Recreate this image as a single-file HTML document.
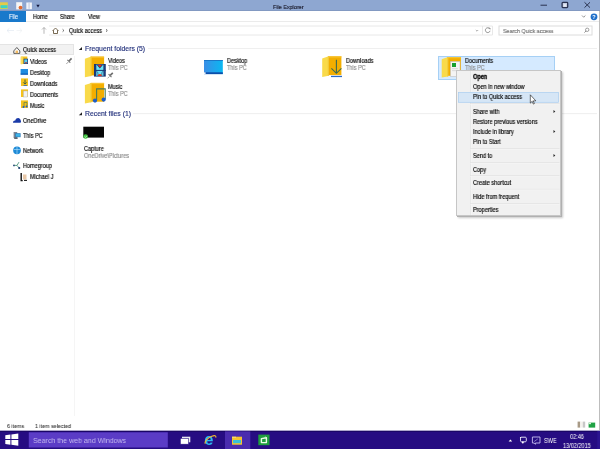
<!DOCTYPE html>
<html><head><meta charset="utf-8">
<style>
*{margin:0;padding:0;box-sizing:border-box}
html,body{width:600px;height:449px;overflow:hidden;background:#fff;font-family:"Liberation Sans",sans-serif;color:#000}
.a{position:absolute;white-space:nowrap}
.t{font-size:6.3px;line-height:7px;transform:scaleX(.88);transform-origin:0 0;will-change:transform;-webkit-text-stroke:0.15px currentColor}
.g{color:#8a8a8a}
svg{position:absolute;overflow:visible}
</style></head><body>
<!-- ===== title bar ===== -->
<div class="a" style="left:0;top:0;width:600px;height:11px;background:#8ea7d1;border-bottom:1px solid #8299c2"></div>
<svg style="left:0;top:0" width="45" height="11">
  <rect x="0" y="2.3" width="7.8" height="6.7" fill="#e4cc48"/>
  <rect x="0.5" y="5.2" width="7" height="3" fill="#3cd4c8"/>
  <rect x="16.2" y="2.2" width="6" height="7.2" fill="#f6f6f6"/>
  <circle cx="20.5" cy="7.6" r="1.9" fill="#e26a30"/>
  <rect x="26.3" y="2.5" width="5.6" height="6.7" fill="#f2f4fa"/>
  <rect x="28.6" y="3" width="0.9" height="5.8" fill="#b8c4dc"/>
  <path d="M36.3 4.8h3.4l-1.7 2.6z" fill="#141a40"/>
</svg>
<div class="a t" style="left:273px;top:2.6px;font-size:6.2px;color:#1a1a2a">File Explorer</div>
<svg style="left:0;top:0" width="600" height="11">
  <rect x="540.5" y="4.7" width="6.5" height="1" fill="#2a3350"/>
  <rect x="562.1" y="2.4" width="5.6" height="5.2" rx="0.8" fill="#c8d0e4" stroke="#2a3350" stroke-width="1.3"/><rect x="563.6" y="4.2" width="2.4" height="2.4" fill="#e8ecf4"/>
  <path d="M584.5 2.3l5.5 5.3M590 2.3l-5.5 5.3" stroke="#2a3350" stroke-width="1"/>
</svg>
<div class="a" style="left:599px;top:11px;width:1px;height:419px;background:#bdbdbd"></div>

<!-- ===== ribbon tabs ===== -->
<div class="a" style="left:0;top:11px;width:26px;height:11px;background:#1979cb"></div>
<div class="a t" style="left:9px;top:12.9px;color:#e8f2ff">File</div>
<div class="a t" style="left:33px;top:12.9px">Home</div>
<div class="a t" style="left:60px;top:12.9px">Share</div>
<div class="a t" style="left:88px;top:12.9px">View</div>
<div class="a" style="left:26px;top:21.3px;width:573px;height:1px;background:#ebebeb"></div>
<svg style="left:0;top:0" width="600" height="40">
  <path d="M582 15.5l1.7 1.7 1.7-1.7" fill="none" stroke="#777" stroke-width="0.8"/>
  <circle cx="594" cy="16.8" r="3.4" fill="#1f6fc9"/>
  <text x="592.3" y="19.3" font-size="5.5" font-weight="bold" fill="#fff" font-family="Liberation Sans">?</text>
</svg>

<!-- ===== address row ===== -->
<svg style="left:0;top:0" width="600" height="40">
  <path d="M7 30.5h7M7 30.5l2.5-2.3M7 30.5l2.5 2.3" fill="none" stroke="#e2eaf2" stroke-width="0.7"/>
  <path d="M16.5 30.5h5.5M22 30.5l-2.5-2.3M22 30.5l-2.5 2.3" fill="none" stroke="#eef1f4" stroke-width="0.7"/>
  <path d="M44 33.8v-6.3M42 29.5l2-2 2 2" fill="none" stroke="#9a9a9a" stroke-width="0.7"/>
  <path d="M52.5 31l3-3 3 3M53.5 30.2v3.3h4v-3.3" fill="none" stroke="#6a5a40" stroke-width="0.9"/>
  <path d="M62.6 29.3l1.3 1.2-1.3 1.2" fill="none" stroke="#444" stroke-width="0.8"/>
  <path d="M106 29.3l1.3 1.2-1.3 1.2" fill="none" stroke="#444" stroke-width="0.8"/>
  <path d="M49 26H492.5V35H49" fill="none" stroke="#e8e8e8" stroke-width="1"/>
  <path d="M475.8 30l1.2 1.2 1.2-1.2" fill="none" stroke="#888" stroke-width="0.7"/>
  <rect x="482" y="26" width="0.8" height="9" fill="#e4e4e4"/>
  <path d="M489.6 28.6a2.4 2.4 0 1 0 .5 2.2" fill="none" stroke="#777" stroke-width="0.8"/>
  <path d="M488.6 28.3l1.4-.3.2 1.4" fill="none" stroke="#777" stroke-width="0.7"/>
  <rect x="499" y="26" width="93" height="9" fill="none" stroke="#dcdcdc" stroke-width="1"/>
  <circle cx="587.2" cy="29.8" r="1.7" fill="none" stroke="#777" stroke-width="0.7"/>
  <path d="M586 31l-1.6 1.6" stroke="#777" stroke-width="0.8"/>
</svg>
<div class="a t" style="left:69px;top:27.3px">Quick access</div>
<div class="a t g" style="left:503px;top:27.3px;font-size:6.1px;color:#707070">Search Quick access</div>

<!-- ===== nav pane ===== -->
<div class="a" style="left:0;top:44px;width:74px;height:11px;background:#f2f2f2;border:0.5px solid #e4e4e4;border-left:0"></div>
<div class="a t" style="left:23px;top:46px">Quick access</div>
<div class="a t" style="left:30px;top:57.5px">Videos</div>
<div class="a t" style="left:30px;top:68.5px">Desktop</div>
<div class="a t" style="left:30px;top:79.5px">Downloads</div>
<div class="a t" style="left:30px;top:90.5px">Documents</div>
<div class="a t" style="left:30px;top:101.5px">Music</div>
<div class="a t" style="left:23px;top:116.5px">OneDrive</div>
<div class="a t" style="left:23px;top:131.5px">This PC</div>
<div class="a t" style="left:23px;top:146.5px">Network</div>
<div class="a t" style="left:23px;top:161.5px">Homegroup</div>
<div class="a t" style="left:30px;top:173px">Michael J</div>
<div class="a" style="left:74px;top:56px;width:1px;height:360px;background:#f5f5f5"></div>


<svg style="left:0;top:0" width="80" height="190">
  <!-- quick access home -->
  <path d="M13.8 50.9l3-3.4 3 3.4v2.5h-6z" fill="#fafafa" stroke="#4a4a4a" stroke-width="0.9" stroke-linejoin="round"/><rect x="15.6" y="50.6" width="2.4" height="2.6" fill="#f0b860"/>
  <!-- videos -->
  <rect x="20.8" y="56.5" width="6.5" height="7.5" fill="#f5c21c"/>
  <path d="M20.8 57.2l2-.7v7.6l-2 .3z" fill="#f9de60"/>
  <rect x="23.6" y="58.7" width="4.4" height="5.3" fill="#1c3a78"/>
  <rect x="24.3" y="59.4" width="3" height="3.9" fill="#5ccbea"/>
  <rect x="25" y="62.3" width="2" height="1" fill="#c03020"/>
  <!-- desktop -->
  <rect x="20.6" y="69" width="7.4" height="5.6" fill="#1f8ce0"/>
  <rect x="20.6" y="73.6" width="7.4" height="1" fill="#0c4eaa"/>
  <!-- downloads -->
  <rect x="21" y="78.4" width="7" height="7.6" fill="#f5c21c"/>
  <path d="M25 79.5v4.5M23.3 82.4l1.7 1.7 1.7-1.7" fill="none" stroke="#2f5a46" stroke-width="0.9"/>
  <rect x="23.5" y="85.2" width="3.5" height="0.8" fill="#2a6ac8"/>
  <!-- documents -->
  <rect x="21" y="89.4" width="7" height="7.6" fill="#f5c21c"/>
  <rect x="23.4" y="91" width="4.2" height="6" fill="#f2f2f2" stroke="#aaa" stroke-width="0.4"/>
  <!-- music -->
  <rect x="21" y="100.4" width="7" height="7.6" fill="#f5c21c"/>
  <path d="M24 107v-4.6h3v4" fill="none" stroke="#4a7a58" stroke-width="0.7"/>
  <circle cx="23.5" cy="107" r="1" fill="#1d5ec8"/><circle cx="26.6" cy="106.6" r="1" fill="#1d5ec8"/>
  <!-- pin -->
  <g transform="translate(0,0)"><path d="M69 61l2.6-2.6" stroke="#6e6e6e" stroke-width="1.7"/><path d="M67.4 59.8l2.9 2.9" stroke="#6e6e6e" stroke-width="1.1"/><path d="M68.3 62l-2 2" stroke="#8a8a8a" stroke-width="0.8"/></g>
  <!-- onedrive -->
  <path d="M13 122.7c0-1.6 1.2-2.4 2.3-2.2.4-1.6 1.6-2.4 2.8-2.4 1.3 0 2.4 1 2.6 2.4.7.1 .1 2.2-.1 2.2z" fill="#1a3aa8"/>
  <!-- this pc -->
  <rect x="13.6" y="132" width="3.6" height="6" fill="#7a8694"/>
  <rect x="15.2" y="133.2" width="5.4" height="4" fill="#2c7ab8"/>
  <rect x="15.9" y="133.8" width="4" height="2.8" fill="#3cb4e8"/>
  <rect x="14.2" y="137.4" width="3.4" height="1.6" fill="#5a6470"/>
  <!-- network -->
  <circle cx="17" cy="150.4" r="3.8" fill="#1e8ad6"/>
  <path d="M14 149.5h6M17 146.8v7.2" stroke="#b8e4ff" stroke-width="0.6"/>
  <!-- homegroup -->
  <circle cx="14" cy="165.4" r="0.9" fill="#1a3a70"/>
  <path d="M14.5 165.4h2.5l2-3.3M17 165.4l2 2.4" fill="none" stroke="#3a8a70" stroke-width="0.8"/>
  <circle cx="19.2" cy="168" r="1.1" fill="#1a3a70"/>
  <!-- user -->
  <path d="M21.2 173v7.6h1.5" fill="none" stroke="#111" stroke-width="1.4"/>
  <rect x="23" y="174.5" width="3.5" height="5" fill="#e8c8a8"/>
  <path d="M24 180.4h3" stroke="#111" stroke-width="1"/>
</svg>
<!-- ===== content ===== -->
<div class="a" style="left:438px;top:55.5px;width:117px;height:24.5px;background:#d5eaff;border:1px solid #a6d0f5"></div>
<div class="a" style="left:84.7px;top:44.6px;font-size:6.85px;line-height:8px;color:#24327c;will-change:transform;-webkit-text-stroke:0.15px currentColor">Frequent folders (5)</div>
<div class="a" style="left:84.7px;top:109.8px;font-size:6.85px;line-height:8px;color:#24327c;will-change:transform;-webkit-text-stroke:0.15px currentColor">Recent files (1)</div>


<svg style="left:0;top:0" width="600" height="200">
  
  <path d="M78.8 50l3.2-3v3z" fill="#222"/>
  <rect x="148" y="48" width="449" height="0.8" fill="#ececec"/>
  <path d="M78.8 115.3l3.2-3v3z" fill="#222"/>
  <rect x="133" y="113.3" width="464" height="0.8" fill="#eaeaea"/>
  <!-- Videos -->
  <g transform="translate(84.9,56.6)">
      <rect x="5.8" y="0" width="13.4" height="18.8" fill="#f3ae00"/>
      <rect x="5.8" y="0" width="13.4" height="1.2" fill="#f8c430"/>
      <path d="M0 2.2L6.4 0V19.4L0 20.6Z" fill="#f9da4a"/>
      <path d="M5.6 0.1L6.6 0V19.4L5.6 19.6Z" fill="#f0c838"/>
    </g>
  <rect x="94" y="64" width="11.75" height="12.6" fill="#1a3570"/>
  <rect x="96.3" y="64.7" width="7.1" height="11.2" fill="#6ee6f6"/>
  <path d="M96.6 64.7h6.5l-3.25 3.9z" fill="#1a3570"/>
  <path d="M97.6 64.7h4.5l-2.25 2.8z" fill="#e0301c"/>
  <rect x="94" y="69.9" width="11.75" height="1" fill="#1a3570"/>
  <path d="M96.3 71c1.6.6 2 2.5 1.4 5M103.4 71c-1.6.6-2 2.5-1.4 5" fill="none" stroke="#1a3570" stroke-width="0.6"/>
  <path d="M97.7 75.9a2.1 1.9 0 0 1 4.2 0z" fill="#e0301c"/>
  <path d="M95.1 65.5v10M104.6 65.5v10" stroke="#3a5aa0" stroke-width="0.7" stroke-dasharray="0.8 1.2"/>
  <g transform="translate(41.2,14.4)"><path d="M69 61l2.6-2.6" stroke="#6e6e6e" stroke-width="1.7"/><path d="M67.4 59.8l2.9 2.9" stroke="#6e6e6e" stroke-width="1.1"/><path d="M68.3 62l-2 2" stroke="#8a8a8a" stroke-width="0.8"/></g>
  <!-- Music -->
  <g transform="translate(84.9,82.9)">
      <rect x="5.8" y="0" width="13.4" height="18.8" fill="#f3ae00"/>
      <rect x="5.8" y="0" width="13.4" height="1.2" fill="#f8c430"/>
      <path d="M0 2.2L6.4 0V19.4L0 20.6Z" fill="#f9da4a"/>
      <path d="M5.6 0.1L6.6 0V19.4L5.6 19.6Z" fill="#f0c838"/>
    </g>
  <path d="M96.6 100V88.9H105.2V99" fill="none" stroke="#4a7a58" stroke-width="1.1"/>
  <circle cx="95" cy="100.6" r="2.1" fill="#1d5ec8"/>
  <circle cx="103.7" cy="99.6" r="2.1" fill="#1d5ec8"/>
  <!-- Desktop -->
  <defs><linearGradient id="dg" x1="0" x2="1"><stop offset="0" stop-color="#3a8ee6"/><stop offset="1" stop-color="#0ab8f2"/></linearGradient></defs>
  <rect x="204" y="60" width="18.8" height="14.1" fill="url(#dg)"/>
  <rect x="204" y="60" width="18.8" height="1" fill="#1a78c8"/>
  <rect x="204" y="72.3" width="18.8" height="1.8" fill="#0c4eaa"/>
  <rect x="204" y="72.3" width="1.6" height="1.8" fill="#e8f4ff"/>
  <!-- Downloads -->
  <g transform="translate(322.2,56.3)">
      <rect x="5.8" y="0" width="13.4" height="18.8" fill="#f3ae00"/>
      <rect x="5.8" y="0" width="13.4" height="1.2" fill="#f8c430"/>
      <path d="M0 2.2L6.4 0V19.4L0 20.6Z" fill="#f9da4a"/>
      <path d="M5.6 0.1L6.6 0V19.4L5.6 19.6Z" fill="#f0c838"/>
    </g>
  <path d="M336.4 59.8v13.3M331.4 68.4l5 4.9 5-4.9" fill="none" stroke="#3b6b52" stroke-width="1.1"/>
  <rect x="331" y="75.8" width="11" height="1.3" fill="#2a6ac8"/>
  <!-- Documents -->
  <g transform="translate(441.7,57)">
      <rect x="5.8" y="0" width="13.4" height="18.8" fill="#f3ae00"/>
      <rect x="5.8" y="0" width="13.4" height="1.2" fill="#f8c430"/>
      <path d="M0 2.2L6.4 0V19.4L0 20.6Z" fill="#f9da4a"/>
      <path d="M5.6 0.1L6.6 0V19.4L5.6 19.6Z" fill="#f0c838"/>
    </g>
  <rect x="450.4" y="61.4" width="9.6" height="15.3" fill="#f4f4f4" stroke="#b8b8b8" stroke-width="0.5"/>
  <rect x="452" y="63" width="4" height="4" fill="#18a030"/>
  <rect x="452" y="68.5" width="6" height="0.6" fill="#c8c8c8"/>
  <rect x="452" y="70.5" width="6" height="0.6" fill="#c8c8c8"/>
  <!-- Capture -->
  <rect x="83.3" y="126.7" width="20.7" height="10.9" fill="#050505"/>
  <circle cx="85.6" cy="136.5" r="2.3" fill="#3cc03c"/>
  <path d="M84.6 136.5l.9.9 1.4-1.6" fill="none" stroke="#fff" stroke-width="0.6"/>
</svg>
<div class="a t" style="left:108px;top:56.8px">Videos</div>
<div class="a t g" style="left:108px;top:63.5px">This PC</div>
<div class="a t" style="left:108px;top:83.3px">Music</div>
<div class="a t g" style="left:108px;top:90px">This PC</div>
<div class="a t" style="left:227px;top:56.8px">Desktop</div>
<div class="a t g" style="left:227px;top:63.5px">This PC</div>
<div class="a t" style="left:346px;top:56.8px">Downloads</div>
<div class="a t g" style="left:346px;top:63.5px">This PC</div>
<div class="a t" style="left:465px;top:56.8px">Documents</div>
<div class="a t g" style="left:465px;top:63.5px">This PC</div>
<div class="a t" style="left:84.3px;top:144.5px">Capture</div>
<div class="a t g" style="left:84.3px;top:151.8px">OneDrive\Pictures</div>

<!-- ===== status bar ===== -->
<div class="a t" style="left:6.5px;top:421.8px;font-size:6.1px;color:#2a2a2a;-webkit-text-stroke:0.05px #2a2a2a">6 items</div>
<div class="a t" style="left:34.5px;top:421.8px;font-size:6.1px;color:#2a2a2a;-webkit-text-stroke:0.05px #2a2a2a">1 item selected</div>

<!-- ===== taskbar ===== -->
<svg style="left:0;top:0" width="600" height="449"><rect x="0" y="430.8" width="600" height="19" fill="#260c82"/><rect x="0" y="430.8" width="600" height="1" fill="#180660"/></svg>
<svg style="left:0;top:0" width="600" height="449"><rect x="28.8" y="432.3" width="139" height="15.2" fill="#5b3cc6"/></svg>
<div class="a t" style="left:33px;top:435.5px;font-size:8px;line-height:9px;color:#c4b8f0;-webkit-text-stroke:0">Search the web and Windows</div>
<svg style="left:0;top:0" width="600" height="449"><rect x="225" y="431.4" width="25.3" height="17.6" fill="#4a2cae"/></svg>


<!-- ===== context menu ===== -->
<div class="a" style="left:456px;top:70px;width:105px;height:146px;background:#f1f1f1;border:1px solid #c6c6c6;box-shadow:1px 1px 0 #b0b0b0,2px 2px 2px rgba(0,0,0,.22)"></div>
<svg style="left:0;top:0" width="600" height="230">
  <rect x="470" y="71" width="0.8" height="144" fill="#e2e3e3"/><rect x="470.8" y="71" width="0.6" height="144" fill="#fbfbfb"/>
  <rect x="470" y="103.5" width="89.5" height="0.7" fill="#dcdcdc"/><rect x="470" y="104.2" width="89.5" height="0.5" fill="#fbfbfb"/>
  <rect x="470" y="148.1" width="89.5" height="0.7" fill="#dcdcdc"/><rect x="470" y="148.8" width="89.5" height="0.5" fill="#fbfbfb"/>
  <rect x="470" y="162.1" width="89.5" height="0.7" fill="#dcdcdc"/><rect x="470" y="162.8" width="89.5" height="0.5" fill="#fbfbfb"/>
  <rect x="470" y="175.5" width="89.5" height="0.7" fill="#dcdcdc"/><rect x="470" y="176.2" width="89.5" height="0.5" fill="#fbfbfb"/>
  <rect x="470" y="188.9" width="89.5" height="0.7" fill="#dcdcdc"/><rect x="470" y="189.6" width="89.5" height="0.5" fill="#fbfbfb"/>
  <rect x="470" y="203.1" width="89.5" height="0.7" fill="#dcdcdc"/><rect x="470" y="203.8" width="89.5" height="0.5" fill="#fbfbfb"/>
  <rect x="458.5" y="92.5" width="100" height="9.8" fill="#d6e6f6" stroke="#a9cdf0" stroke-width="0.7"/>
  <path d="M553.5 109.9l1.8 1.5-1.8 1.5z" fill="#222"/>
  <path d="M553.5 130.1l1.8 1.5-1.8 1.5z" fill="#222"/>
  <path d="M553.5 154.1l1.8 1.5-1.8 1.5z" fill="#222"/>
</svg>
<div class="a t" style="left:472.6px;top:73.0px;font-size:6.35px;font-weight:bold;-webkit-text-stroke:0.3px #000">Open</div>
<div class="a t" style="left:472.6px;top:83.3px;font-size:6.35px">Open in new window</div>
<div class="a t" style="left:472.6px;top:93.4px;font-size:6.35px">Pin to Quick access</div>
<div class="a t" style="left:472.6px;top:107.7px;font-size:6.35px">Share with</div>
<div class="a t" style="left:472.6px;top:118.0px;font-size:6.35px">Restore previous versions</div>
<div class="a t" style="left:472.6px;top:128.1px;font-size:6.35px">Include in library</div>
<div class="a t" style="left:472.6px;top:138.2px;font-size:6.35px">Pin to Start</div>
<div class="a t" style="left:472.6px;top:152.0px;font-size:6.35px">Send to</div>
<div class="a t" style="left:472.6px;top:165.7px;font-size:6.35px">Copy</div>
<div class="a t" style="left:472.6px;top:179.1px;font-size:6.35px">Create shortcut</div>
<div class="a t" style="left:472.6px;top:192.6px;font-size:6.35px">Hide from frequent</div>
<div class="a t" style="left:472.6px;top:205.9px;font-size:6.35px">Properties</div>
<svg style="left:0;top:0" width="600" height="120">
  <path d="M530.3 94.8v8.3l1.9-1.8 1.2 2.8 1-.5-1.2-2.7 2.6-.1z" fill="#fff" stroke="#111" stroke-width="0.6" stroke-linejoin="round"/>
</svg>

<svg style="left:0;top:0" width="600" height="449">
  
  <!-- windows logo -->
  <path d="M5.3 435.2l5.1-.7v4.6h-5.1z M11.4 434.4l6.9-.9v5.6h-6.9z M5.3 440.1h5.1v4.6l-5.1-.7z M11.4 440.1h6.9v5.6l-6.9-.9z" fill="#fff"/>
  <!-- task view -->
  <rect x="182" y="436.7" width="8.3" height="5.6" fill="#e8e8f0"/>
  <rect x="180.3" y="438.3" width="8.3" height="5.9" fill="#fff" stroke="#260c82" stroke-width="0.6"/>
  <!-- IE -->
  <text x="204.3" y="445.2" font-family="Liberation Sans" font-size="16.5" font-weight="bold" fill="#2cb8f2">e</text>
  <path d="M205.2 443.8c-1-2 2.2-5.8 6.6-7.6 2.9-1.1 4.6-.7 4 1.4" fill="none" stroke="#f2bc30" stroke-width="1.1"/>
  <!-- explorer tile icon -->
  <rect x="232" y="436.7" width="10" height="8" fill="#f4c430"/>
  <rect x="232" y="436.7" width="4" height="1.2" fill="#f9dc70"/>
  <rect x="233" y="440" width="8" height="3.2" fill="#38c0d8"/>
  <!-- store -->
  <rect x="258.3" y="434.6" width="11.2" height="10.6" fill="#1f9e3e"/>
  <path d="M261.4 438.6l5-.8v4.8h-5z" fill="none" stroke="#e8fbe8" stroke-width="1.4" stroke-linejoin="round"/>
  <path d="M264.6 437.4l.9-1" stroke="#c8f0c8" stroke-width="0.6"/>
  <!-- tray -->
  <path d="M508.6 441.4l1.8-1.8 1.8 1.8z" fill="#fff"/>
  <path d="M520.5 438.2c0-.6.5-1 1-1h3.8c.6 0 1 .4 1 1v2.6c0 .6-.4 1-1 1h-3.8c-.5 0-1-.4-1-1z" fill="none" stroke="#f0f0ff" stroke-width="0.9"/>
  <circle cx="522.8" cy="442.6" r="1" fill="#fff"/><circle cx="520.6" cy="437.6" r="0.7" fill="#fff"/>
  <path d="M532.4 437v6h1.8l1.2 1.3v-1.3h4.6v-6z" fill="none" stroke="#c8bff0" stroke-width="0.9"/>
  <path d="M534.2 441.5l3.6-2.6" stroke="#c8bff0" stroke-width="0.6"/>
  <rect x="597.3" y="431" width="2.7" height="18" fill="#2c1490"/>
  <!-- status bar view icons -->
  <rect x="577.6" y="421.6" width="2.6" height="6" fill="#a89a86"/>
  <rect x="580.2" y="421.6" width="2.6" height="6" fill="#f4f2ee"/>
  <rect x="582.8" y="421.6" width="2.4" height="6" fill="#c8c8c8"/>
  <rect x="588.6" y="422.6" width="6.6" height="5" fill="#1fa244"/>
  <rect x="588.6" y="422.6" width="2.4" height="1.6" fill="#d8f0d8"/>
</svg>
<div class="a t" style="left:543.7px;top:437.3px;color:#fff;-webkit-text-stroke:0">SWE</div>
<div class="a t" style="left:569.7px;top:433.3px;color:#fff;-webkit-text-stroke:0">02:46</div>
<div class="a t" style="left:563px;top:441.5px;color:#fff;-webkit-text-stroke:0">13/02/2015</div>
</body></html>
